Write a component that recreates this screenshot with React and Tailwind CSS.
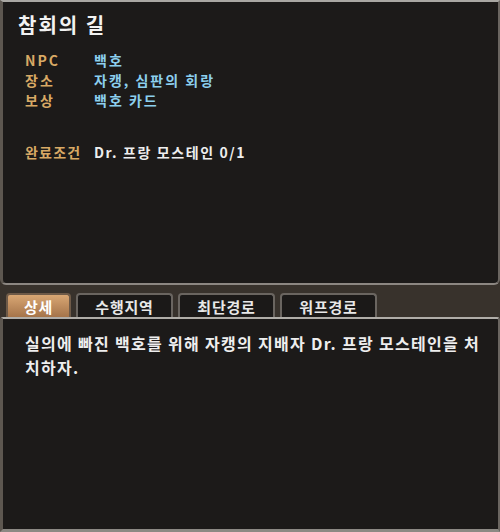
export default function App() {
  const font = { fontFamily: '"Noto Sans CJK KR", "Noto Sans", sans-serif' };
  const tabs = [
    { label: "상세", w: "w-[65px]", active: true },
    { label: "수행지역", w: "w-[97px]" },
    { label: "최단경로", w: "w-[97px]" },
    { label: "워프경로", w: "w-[97px]" },
  ];
  return (
    <div className="w-[500px] h-[532px] bg-[#38322c] flex flex-col overflow-hidden" style={font}>
      <div className="h-[285px] shrink-0 bg-[#1c1a19] border-t-2 border-t-[#a9a7a3] border-l-[3px] border-l-[#5d5750] border-r-2 border-r-[#6a6560] border-b-2 border-b-[#8c8782] rounded-b-[6px] pl-[15px] pt-[11px]">
        <div className="text-[20px] font-bold text-[#f2f2f2] leading-[24px] tracking-[2px]">참회의 길</div>
        <div className="mt-[13px] pl-[7px] text-[14px] font-bold leading-[20px] tracking-[2px]">
          <div className="flex"><span className="w-[69px] text-[#d8a965]">NPC</span><span className="text-[#8ccfee]">백호</span></div>
          <div className="flex"><span className="w-[69px] text-[#d8a965]">장소</span><span className="text-[#8ccfee]">자캥, 심판의 회랑</span></div>
          <div className="flex"><span className="w-[69px] text-[#d8a965]">보상</span><span className="text-[#8ccfee]">백호 카드</span></div>
          <div className="flex mt-[32px]"><span className="w-[69px] text-[#d8a965] tracking-[1.2px]">완료조건</span><span className="text-[#eeeeee] tracking-[1.6px]">Dr. 프랑 모스테인 0/1</span></div>
        </div>
      </div>
      <div className="h-[8px] shrink-0" />
      <div className="flex h-[24px] shrink-0 pl-[6px] gap-[5px] items-end">
        {tabs.map((t) => (
          <div
            key={t.label}
            className={
              t.w +
              " h-[24px] rounded-t-[4px] border-t-2 border-x-2 flex items-center justify-center text-[15px] font-bold leading-none tracking-[0.8px] " +
              (t.active
                ? "bg-gradient-to-b from-[#d9a774] to-[#a5744a] border-[#6e5a48] text-[#ffffff]"
                : "bg-[#1b1918] border-[#6a6560] text-[#e8e8e8]")
            }
          >
            {t.label}
          </div>
        ))}
      </div>
      <div className="flex-1 bg-[#1c1a19] border-t-2 border-t-[#b0ada8] border-l-[3px] border-l-[#5d5750] border-r-2 border-r-[#6a6560] border-b-[3px] border-b-[#8c8984] rounded-t-[3px] pl-[22px] pr-[6px] pt-[12px]">
        <div className="text-[16px] font-bold leading-[24px] tracking-[1.3px] text-[#eeeeee] whitespace-nowrap">
          실의에 빠진 백호를 위해 자캥의 지배자 Dr. 프랑 모스테인을 처<br />치하자.
        </div>
      </div>
    </div>
  );
}
